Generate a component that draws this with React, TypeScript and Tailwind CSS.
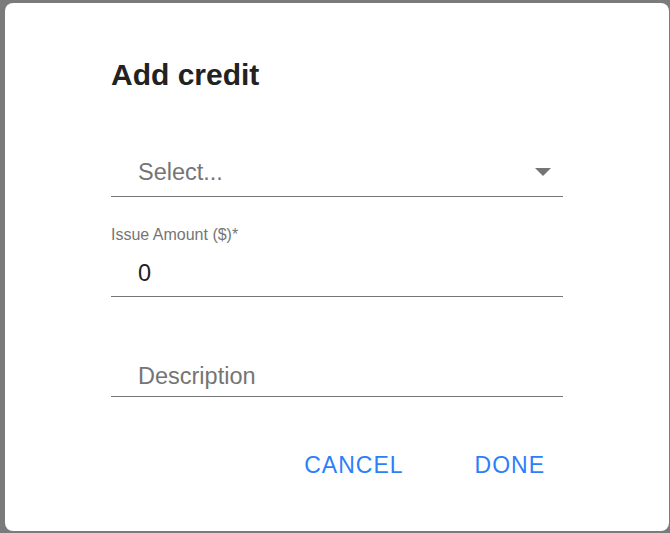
// App.tsx — "Add credit" dialog over a dimmed page

const fieldText = "text-[23.5px] leading-[28px]";

function Field({ children, className = "" }: { children: React.ReactNode; className?: string }) {
  return (
    <div className={`flex items-start justify-between border-b border-[#767676] pl-[27px] ${className}`}>
      {children}
    </div>
  );
}

export default function App() {
  return (
    <div
      className="h-[533px] w-[670px] overflow-hidden bg-[#7b7b7b] pl-[5px] pt-[3px]"
      style={{ fontFamily: '"Liberation Sans", Arial, sans-serif' }}
    >
      <div className="flex h-[528px] w-[664px] flex-col rounded-[8px] bg-white pl-[106px]">
        <div className="w-[452px]">

          {/* Title */}
          <h2 className="mt-[55px] h-[34px] text-[30px] font-bold leading-[34px] text-[#222]">
            Add credit
          </h2>

          {/* Select */}
          <Field className="mt-[66px] h-[39px]">
            <span className={`${fieldText} text-[#757575]`}>Select...</span>
            <svg width="16" height="8" viewBox="0 0 16 8" className="mr-[12px] mt-[10px]">
              <path d="M0 0 L16 0 L8 8 Z" fill="#757575" />
            </svg>
          </Field>

          {/* Issue amount */}
          <p className="mt-[28px] h-[20px] text-[16px] leading-[20px] text-[#757575]">
            Issue Amount ($)*
          </p>
          <Field className="mt-[14px] h-[38px]">
            <span className={`${fieldText} text-[#222]`}>0</span>
          </Field>

          {/* Description */}
          <Field className="mt-[65px] h-[35px]">
            <span className={`${fieldText} text-[#757575]`}>Description</span>
          </Field>

          {/* Actions */}
          <div className="mt-[54px] flex justify-end gap-[71px] pr-[18px]">
            <button className="text-[23px] leading-[28px] tracking-[1px] text-[#2d7ff9]">CANCEL</button>
            <button className="text-[23px] leading-[28px] tracking-[1px] text-[#2d7ff9]">DONE</button>
          </div>

        </div>
      </div>
    </div>
  );
}
